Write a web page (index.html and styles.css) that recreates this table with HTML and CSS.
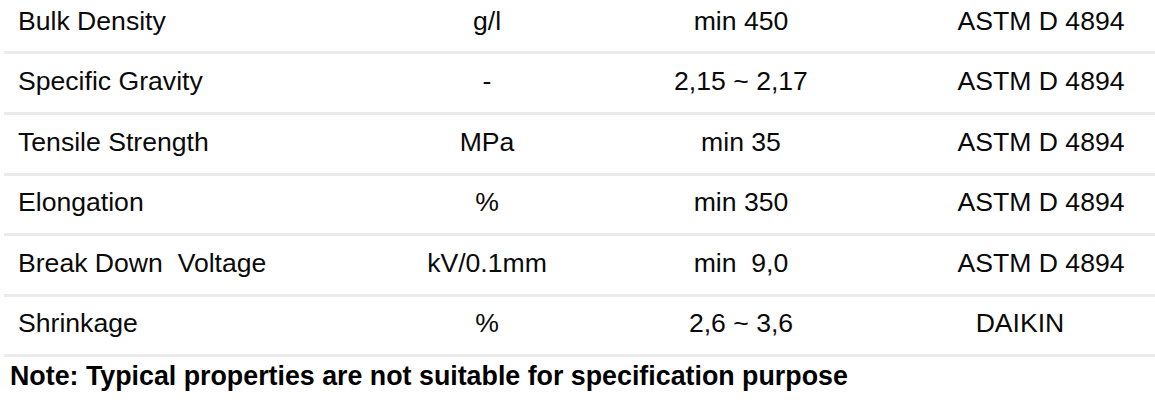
FILE: index.html
```html
<!DOCTYPE html>
<html lang="en">
<head>
    <meta charset="UTF-8">
    <meta name="viewport" content="width=device-width, initial-scale=1.0">
    <title>Typical Properties</title>
    <link rel="stylesheet" href="styles.css">
</head>
<body>
    <div class="props">
        <div class="row first">
            <div class="cell name">Bulk Density</div>
            <div class="cell">g/l</div>
            <div class="cell">min 450</div>
            <div class="cell">ASTM D 4894</div>
        </div>
        <div class="row">
            <div class="cell name">Specific Gravity</div>
            <div class="cell">-</div>
            <div class="cell">2,15 ~ 2,17</div>
            <div class="cell">ASTM D 4894</div>
        </div>
        <div class="row">
            <div class="cell name">Tensile Strength</div>
            <div class="cell">MPa</div>
            <div class="cell">min 35</div>
            <div class="cell">ASTM D 4894</div>
        </div>
        <div class="row">
            <div class="cell name">Elongation</div>
            <div class="cell">%</div>
            <div class="cell">min 350</div>
            <div class="cell">ASTM D 4894</div>
        </div>
        <div class="row">
            <div class="cell name">Break Down&nbsp; Voltage</div>
            <div class="cell">kV/0.1mm</div>
            <div class="cell">min&nbsp; 9,0</div>
            <div class="cell">ASTM D 4894</div>
        </div>
        <div class="row">
            <div class="cell name">Shrinkage</div>
            <div class="cell">%</div>
            <div class="cell">2,6 ~ 3,6</div>
            <div class="cell daikin">DAIKIN</div>
        </div>
    </div>

    <p class="note">Note: Typical properties are not suitable for specification purpose</p>
</body>
</html>
```

FILE: styles.css
```css
body {
    margin: 0;
    padding: 0;
    background: #ffffff;
    color: #0a0a0a;
    font-family: "Liberation Sans", Arial, sans-serif;
    font-size: 26.6px;
}
.props {
    margin-left: 4px;
}
.row {
    display: grid;
    grid-template-columns: 415px 136px 372px 228px;
    padding: 11.7px 0 15.9px;
    line-height: 30px;
    border-bottom: 3px solid #ebebeb;
}
.row.first {
    padding-top: 5.5px;
}
.cell {
    text-align: center;
    white-space: nowrap;
}
.cell.name {
    text-align: left;
    padding-left: 14px;
}
.cell.daikin {
    padding-right: 42px;
}
.note {
    margin: 0 0 0 10px;
    padding-top: 3.8px;
    line-height: 30px;
    font-size: 26.8px;
    font-weight: bold;
    color: #000;
}
```
